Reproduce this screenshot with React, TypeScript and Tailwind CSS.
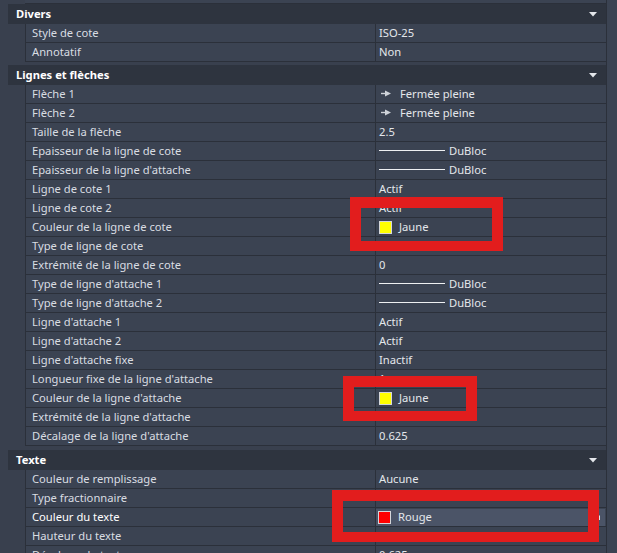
import React from "react";

type Val =
  | { t: "text"; v: string }
  | { t: "arrow"; v: string }
  | { t: "line"; v: string }
  | { t: "color"; v: string; c: string; active?: boolean }
  | { t: "none" };

type Row = { label: string; value: Val; bright?: boolean };
type Group = { title: string; rows: Row[]; gap: string };

const txt = (v: string): Val => ({ t: "text", v });
const line = (): Val => ({ t: "line", v: "DuBloc" });

const groups: Group[] = [
  {
    title: "Divers",
    gap: "mt-0",
    rows: [
      { label: "Style de cote", value: txt("ISO-25") },
      { label: "Annotatif", value: txt("Non") },
    ],
  },
  {
    title: "Lignes et flèches",
    gap: "mt-[3px]",
    rows: [
      { label: "Flèche 1", value: { t: "arrow", v: "Fermée pleine" } },
      { label: "Flèche 2", value: { t: "arrow", v: "Fermée pleine" } },
      { label: "Taille de la flèche", value: txt("2.5") },
      { label: "Epaisseur de la ligne de cote", value: line() },
      { label: "Epaisseur de la ligne d'attache", value: line() },
      { label: "Ligne de cote 1", value: txt("Actif") },
      { label: "Ligne de cote 2", value: txt("Actif") },
      { label: "Couleur de la ligne de cote", value: { t: "color", v: "Jaune", c: "#ffff00" } },
      { label: "Type de ligne de cote", value: { t: "none" } },
      { label: "Extrémité de la ligne de cote", value: txt("0") },
      { label: "Type de ligne d'attache 1", value: line() },
      { label: "Type de ligne d'attache 2", value: line() },
      { label: "Ligne d'attache 1", value: txt("Actif") },
      { label: "Ligne d'attache 2", value: txt("Actif") },
      { label: "Ligne d'attache fixe", value: txt("Inactif") },
      { label: "Longueur fixe de la ligne d'attache", value: txt("1") },
      { label: "Couleur de la ligne d'attache", value: { t: "color", v: "Jaune", c: "#ffff00" } },
      { label: "Extrémité de la ligne d'attache", value: txt("1.25") },
      { label: "Décalage de la ligne d'attache", value: txt("0.625") },
    ],
  },
  {
    title: "Texte",
    gap: "mt-[4px]",
    rows: [
      { label: "Couleur de remplissage", value: txt("Aucune") },
      { label: "Type fractionnaire", value: { t: "none" } },
      {
        label: "Couleur du texte",
        value: { t: "color", v: "Rouge", c: "#ff0000", active: true },
        bright: true,
      },
      { label: "Hauteur du texte", value: txt("2.5") },
      { label: "Décalage du texte", value: txt("0.625") },
    ],
  },
];

const Caret = () => (
  <svg width="8" height="5" viewBox="0 0 8 5" className="mr-[9px]">
    <polygon points="0,0 8,0 4,4.5" fill="#e4e7eb" />
  </svg>
);

const ArrowHead = () => (
  <svg width="10" height="7" viewBox="0 0 10 7" className="mr-[9px] ml-[2px]">
    <line x1="0" y1="3.5" x2="5" y2="3.5" stroke="#cfd3d9" strokeWidth="1.4" />
    <polygon points="4,0.5 10,3.5 4,6.5" fill="#cfd3d9" />
  </svg>
);

const Swatch = ({ c }: { c: string }) => (
  <span
    className="mr-[7px] inline-block h-[13px] w-[13px] border border-[#d4d6da]"
    style={{ background: c }}
  />
);

function Value({ value }: { value: Val }) {
  switch (value.t) {
    case "text":
      return <span className="pl-[3px]">{value.v}</span>;
    case "arrow":
      return (
        <span className="flex items-center pl-[3px]">
          <ArrowHead />
          {value.v}
        </span>
      );
    case "line":
      return (
        <span className="flex items-center pl-[3px]">
          <span className="mr-[4px] h-px w-[66px] bg-[#eef0f2]" />
          {value.v}
        </span>
      );
    case "color":
      if (value.active)
        return (
          <span className="flex h-[17px] flex-1 items-center bg-[#4b5467] pl-[2px]">
            <Swatch c={value.c} />
            <span className="flex-1">{value.v}</span>
            <svg width="5" height="5" viewBox="0 0 5 5" className="mr-[5px]">
              <polygon points="5,0 5,5 0,5" fill="#e4e7eb" />
            </svg>
          </span>
        );
      return (
        <span className="flex items-center pl-[3px]">
          <Swatch c={value.c} />
          {value.v}
        </span>
      );
    default:
      return null;
  }
}

function PropRow({ row }: { row: Row }) {
  return (
    <div className="flex h-[19px] shrink-0">
      <div className="w-[17px] shrink-0" />
      <div className="flex flex-1 border-b border-[#2b303a] bg-[#3b4352]">
        <div
          className={
            "flex w-[350px] shrink-0 items-center border-l border-[#2b303a] pl-[6px] " +
            (row.bright ? "text-white" : "text-[#d9dde2]")
          }
        >
          {row.label}
        </div>
        <div className="flex flex-1 items-center border-l border-[#2b303a] pr-px text-[#e4e7eb]">
          <Value value={row.value} />
        </div>
      </div>
    </div>
  );
}

function Section({ group }: { group: Group }) {
  return (
    <div className={"flex shrink-0 flex-col " + group.gap}>
      <div className="flex h-[20px] items-center justify-between bg-[#2e343f] pl-[8px]">
        <span className="font-bold text-white">{group.title}</span>
        <Caret />
      </div>
      {group.rows.map((r) => (
        <PropRow key={r.label} row={r} />
      ))}
    </div>
  );
}

export default function App() {
  return (
    <div
      className="relative flex h-[553px] w-[617px] overflow-hidden bg-[#39404e] text-[11.2px] leading-none"
      style={{ fontFamily: '"Noto Sans", "Open Sans", sans-serif' }}
    >
      <div className="w-[8px] shrink-0" />
      <div className="flex w-[598px] shrink-0 flex-col">
        <div className="flex h-[4px] shrink-0">
          <div className="w-[17px]" />
          <div className="flex-1 border-b border-[#2b303a] bg-[#3b4352]" />
        </div>
        {groups.map((g) => (
          <Section key={g.title} group={g} />
        ))}
      </div>
      <div className="w-[11px] shrink-0 border-l border-[#2b303a] bg-[#3b4352]" />

      {/* annotation frames */}
      <div className="absolute left-[350px] top-[197px] h-[54px] w-[153px] border-[11px] border-b-[10px] border-[#e21d1d]" />
      <div className="absolute left-[343px] top-[376px] h-[45px] w-[134px] border-[11px] border-b-[10px] border-[#e21d1d]" />
      <div className="absolute left-[332px] top-[490px] h-[52px] w-[267px] border-[11px] border-b-[10px] border-[#e21d1d]" />
    </div>
  );
}
